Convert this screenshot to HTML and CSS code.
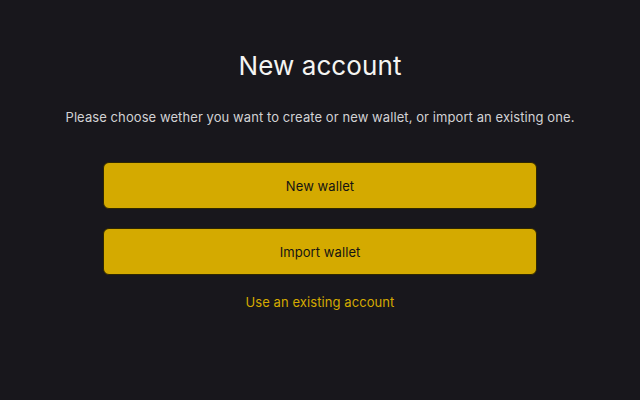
FILE: index.html
```html
<!DOCTYPE html>
<html>
<head>
<meta charset="utf-8">
<link rel="stylesheet" href="styles.css">
</head>
<body>
<main class="page">
  <h1 class="title">New account</h1>
  <p class="subtitle">Please choose wether you want to create or new wallet, or import an existing one.</p>
  <div class="actions">
    <button class="btn">New wallet</button>
    <button class="btn">Import wallet</button>
  </div>
  <a class="link" href="#">Use an existing account</a>
</main>
</body>
</html>
```
FILE: styles.css
```css
html, body {
  margin: 0;
  padding: 0;
  background: #18171c;
  height: 100%;
}
body {
  font-family: Inter, "Noto Sans", sans-serif;
  color: #f2f2f2;
}
.page {
  display: flex;
  flex-direction: column;
  align-items: center;
  padding-top: 49px;
}
.title {
  margin: 0;
  font-size: 26px;
  font-weight: 400;
  line-height: 34px;
  letter-spacing: 0.1px;
  color: #f4f4f2;
}
.subtitle {
  margin: 25px 0 0;
  font-size: 13px;
  line-height: 18px;
  letter-spacing: 0.08px;
  color: #d2d2d4;
}
.actions {
  margin-top: 36px;
  display: flex;
  flex-direction: column;
  gap: 19px;
  width: 434px;
}
.btn {
  box-sizing: border-box;
  height: 47px;
  background: #d4aa00;
  border: 1px solid #2e2700;
  border-radius: 6px;
  font-family: Inter, "Noto Sans", sans-serif;
  font-size: 13px;
  letter-spacing: 0.08px;
  color: #141414;
  padding: 0;
}
.link {
  margin-top: 18px;
  font-size: 13px;
  line-height: 18px;
  letter-spacing: 0.08px;
  color: #d4aa00;
  text-decoration: none;
}
```
